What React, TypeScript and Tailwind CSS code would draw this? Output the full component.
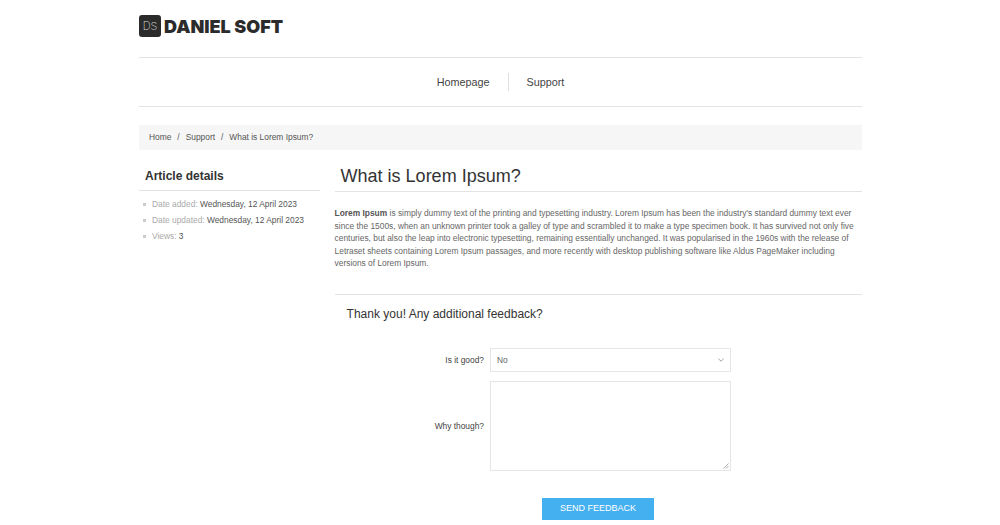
export default function App() {
  return (
    <div className="h-[525px] overflow-hidden bg-white font-['Liberation_Sans',Arial,sans-serif] text-[#333]">
      <div className="mx-[139px] w-[723px]">
        <header className="flex h-[58px] items-start border-b border-[#e3e3e3] pt-[15px]">
          <div className="flex h-[22px] w-[22px] items-center justify-center rounded-[3px] bg-[#2b2b2b] font-['Inter',sans-serif] text-[11px] font-extralight text-[#ddd]">DS</div>
          <span className="ml-[3px] font-['Inter',sans-serif] text-[18px] font-black leading-[23px] text-[#2b2b2b]">DANIEL SOFT</span>
        </header>
        <nav className="flex h-[49px] items-center justify-center border-b border-[#e3e3e3] text-[10.8px]">
          <a className="flex h-[18px] items-center border-r border-[#e0e0e0] pr-[18px] text-[#444]">Homepage</a>
          <a className="pl-[18px] text-[#444]">Support</a>
        </nav>
        <div className="mt-[18px] flex h-[25px] items-center gap-[6px] bg-[#f6f6f6] px-[10px] text-[8.4px] text-[#555]">
          <span>Home</span><span>/</span><span>Support</span><span>/</span><span>What is Lorem Ipsum?</span>
        </div>
        <div className="mt-[13px] flex gap-[14.6px]">
          <aside className="w-[181px] shrink-0">
            <h3 className="flex h-[28px] items-center border-b border-[#e3e3e3] px-[6px] pb-[2px] text-[12px] font-bold">Article details</h3>
            <ul className="mt-[5px] text-[8.4px] leading-[16px]">
              {[["Date added:", "Wednesday, 12 April 2023"], ["Date updated:", "Wednesday, 12 April 2023"], ["Views:", "3"]].map(([a, b]) => (
                <li key={a} className="flex items-center gap-[6px] pl-[4px]">
                  <span className="h-[3px] w-[3px] bg-[#ccc]" />
                  <span className="text-[#aaa]">{a} <span className="text-[#555]">{b}</span></span>
                </li>
              ))}
            </ul>
          </aside>
          <main className="min-w-0 flex-1">
            <h1 className="flex h-[29px] items-center border-b border-[#e3e3e3] px-[6px] pb-[2px] text-[18px] leading-[28px] text-[#333]">What is Lorem Ipsum?</h1>
            <p className="mt-[15px] text-[8.4px] leading-[12.6px] text-[#666]">
              <b className="text-[#555]">Lorem Ipsum</b> is simply dummy text of the printing and typesetting industry. Lorem Ipsum has been the industry's standard dummy text ever since the 1500s, when an unknown printer took a galley of type and scrambled it to make a type specimen book. It has survived not only five centuries, but also the leap into electronic typesetting, remaining essentially unchanged. It was popularised in the 1960s with the release of Letraset sheets containing Lorem Ipsum passages, and more recently with desktop publishing software like Aldus PageMaker including versions of Lorem Ipsum.
            </p>
            <div className="mt-[24px] border-t border-[#e3e3e3] px-[12px] pt-[11px] text-[12px] leading-[16px]">Thank you! Any additional feedback?</div>
            <div className="ml-[80.4px] mt-[26px] flex w-[316px] flex-col gap-[9px] text-[8.4px] text-[#444]">
              <div className="flex items-center gap-[6px]">
                <span className="w-[69px] text-right">Is it good?</span>
                <div className="flex h-[24px] flex-1 items-center justify-between border border-[#e6e6e6] px-[6px] text-[#666]">
                  No
                  <svg width="6" height="4" viewBox="0 0 6 4" fill="none" stroke="#888" strokeWidth=".8"><path d="M.5.8 3 3.2 5.5.8" /></svg>
                </div>
              </div>
              <div className="flex items-center gap-[6px]">
                <span className="w-[69px] text-right">Why though?</span>
                <div className="relative h-[90px] flex-1 border border-[#e6e6e6]">
                  <svg className="absolute bottom-[1px] right-[1px]" width="6" height="6" viewBox="0 0 6 6" stroke="#888" strokeWidth=".7"><path d="M5.5.5.5 5.5M5.5 3 3 5.5" /></svg>
                </div>
              </div>
            </div>
            <button className="ml-[207px] mt-[27px] flex h-[22.5px] w-[112.6px] items-center justify-center bg-[#45b0ef] text-[9px] text-white">SEND FEEDBACK</button>
          </main>
        </div>
      </div>
    </div>
  );
}
